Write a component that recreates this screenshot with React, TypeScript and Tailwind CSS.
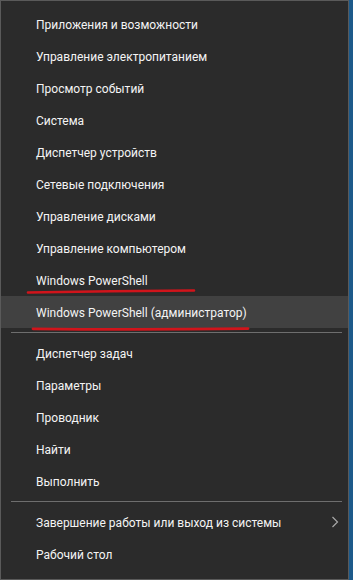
const groups: string[][] = [
  [
    'Приложения и возможности',
    'Управление электропитанием',
    'Просмотр событий',
    'Система',
    'Диспетчер устройств',
    'Сетевые подключения',
    'Управление дисками',
    'Управление компьютером',
    'Windows PowerShell',
    'Windows PowerShell (администратор)',
  ],
  ['Диспетчер задач', 'Параметры', 'Проводник', 'Найти', 'Выполнить'],
  ['Завершение работы или выход из системы', 'Рабочий стол'],
];

const HIGHLIGHT = 'Windows PowerShell (администратор)';
const SUBMENU = 'Завершение работы или выход из системы';

function MenuItem({ label }: { label: string }) {
  return (
    <div
      className={`relative flex h-[32px] items-center whitespace-nowrap pl-[35px] pr-[12px] pt-[2px] text-[12px] text-[#f4f4f4] ${
        label === HIGHLIGHT ? 'bg-[#414141]' : ''
      }`}
    >
      <span className="leading-none">{label}</span>
      {label === SUBMENU && (
        <svg className="absolute right-[9px] top-[10px]" width="8" height="12" viewBox="0 0 8 12">
          <path d="M1.5 1 L6.5 6 L1.5 11" fill="none" stroke="#a8a8a8" strokeWidth="1.2" />
        </svg>
      )}
    </div>
  );
}

export default function App() {
  return (
    <div className="flex h-[580px] w-[353px] bg-[#1d5a8a]" style={{ fontFamily: 'Roboto, "Noto Sans", sans-serif' }}>
      <div className="relative flex h-[580px] w-[349px] flex-col border border-[#5a5a5a] bg-[#2b2b2b] pt-[7px]">
        {groups.map((g, i) => (
          <div key={i}>
            {i > 0 && (
              <div className="pb-[4px] pl-[10px] pr-[6px] pt-[4px]">
                <div className="h-px bg-[#6e6e6e]" />
              </div>
            )}
            {g.map((label) => (
              <MenuItem key={label} label={label} />
            ))}
          </div>
        ))}

        {/* red annotation strokes */}
        <svg className="pointer-events-none absolute left-0 top-0" width="349" height="580">
          <path d="M27 291.5 C80 290.5 140 290 193 289.5" fill="none" stroke="#d1141b" strokeWidth="2.6" strokeLinecap="round" />
          <path d="M32 327.8 C100 328.5 180 328.4 247 327.6" fill="none" stroke="#d1141b" strokeWidth="2.8" strokeLinecap="round" />
        </svg>
      </div>
    </div>
  );
}
